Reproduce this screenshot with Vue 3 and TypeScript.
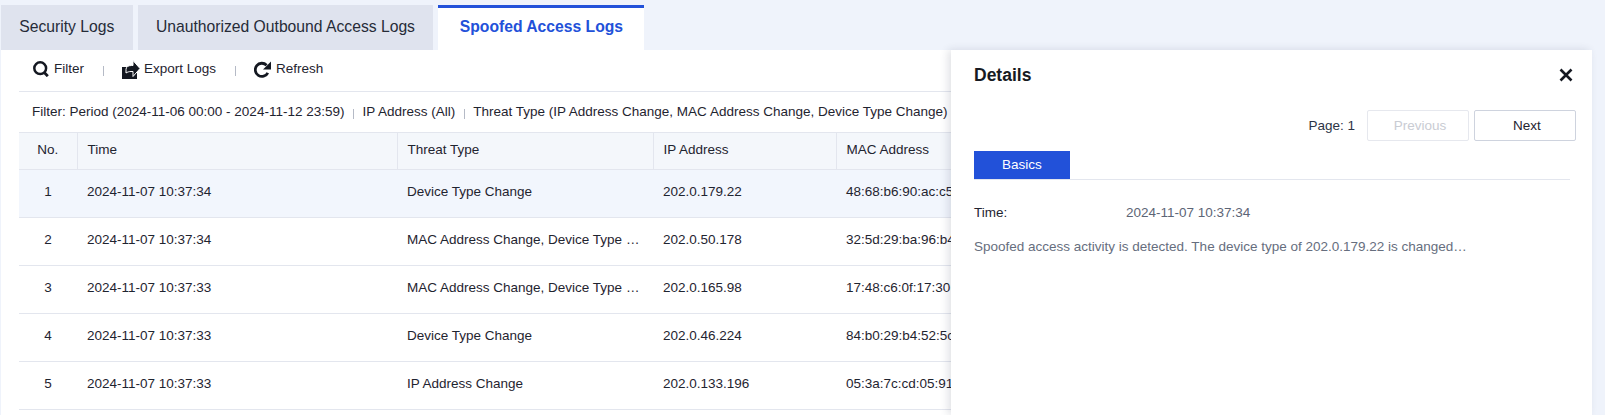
<script setup lang="ts">
interface LogRow {
  no: number
  time: string
  threat: string
  ip: string
  mac: string
}

const tabs = ['Security Logs', 'Unauthorized Outbound Access Logs', 'Spoofed Access Logs']
const activeTab = 2

const rows: LogRow[] = [
  { no: 1, time: '2024-11-07 10:37:34', threat: 'Device Type Change', ip: '202.0.179.22', mac: '48:68:b6:90:ac:c5' },
  { no: 2, time: '2024-11-07 10:37:34', threat: 'MAC Address Change, Device Type Change', ip: '202.0.50.178', mac: '32:5d:29:ba:96:b4' },
  { no: 3, time: '2024-11-07 10:37:33', threat: 'MAC Address Change, Device Type Change', ip: '202.0.165.98', mac: '17:48:c6:0f:17:30' },
  { no: 4, time: '2024-11-07 10:37:33', threat: 'Device Type Change', ip: '202.0.46.224', mac: '84:b0:29:b4:52:5c' },
  { no: 5, time: '2024-11-07 10:37:33', threat: 'IP Address Change', ip: '202.0.133.196', mac: '05:3a:7c:cd:05:91' },
]
</script>

<template>
  <div class="page">
    <div class="tabs">
      <div v-for="(tab, i) in tabs" :key="tab" :class="['tab', { active: i === activeTab }]">{{ tab }}</div>
    </div>

    <div class="content">
      <div class="toolbar">
        <span class="tool">
          <svg width="16" height="16" viewBox="0 0 16 16" fill="none">
            <circle cx="7.200" cy="7.200" r="5.900" stroke="#141821" stroke-width="2.500" />
            <path d="M10.800 11l4 4.200" stroke="#141821" stroke-width="2.800" />
          </svg>
          Filter
        </span>
        <i class="sep"></i>
        <span class="tool">
          <svg class="export-icon" width="18" height="19" viewBox="0 0 18 19">
            <path d="M0 7h7v3h8v9H0z" fill="#141821" />
            <path d="M4 13V9.500C4 7 6 5.500 9.500 5.500H11V.5L18 8.500 11 16.500V11.500H9C7 11.500 5.500 12 4 13z" fill="#141821" stroke="#fff" stroke-width="1" />
          </svg>
          Export Logs
        </span>
        <i class="sep"></i>
        <span class="tool">
          <svg width="17" height="17" viewBox="0 0 17 17" fill="none">
            <path d="M13.800 11.800A6.600 6.600 0 1 1 12.600 4.200" stroke="#141821" stroke-width="2.800" />
            <path d="M9 8.500h8V.5z" fill="#141821" />
          </svg>
          Refresh
        </span>
      </div>

      <div class="filters">
        <span>Filter: Period (2024-11-06 00:00 - 2024-11-12 23:59)</span>
        <i class="sep small"></i>
        <span>IP Address (All)</span>
        <i class="sep small"></i>
        <span>Threat Type (IP Address Change, MAC Address Change, Device Type Change)</span>
      </div>

      <table class="logs">
        <colgroup>
          <col style="width: 58px" />
          <col style="width: 320px" />
          <col style="width: 256px" />
          <col style="width: 183px" />
          <col />
        </colgroup>
        <thead>
          <tr>
            <th class="center">No.</th>
            <th>Time</th>
            <th>Threat Type</th>
            <th>IP Address</th>
            <th>MAC Address</th>
          </tr>
        </thead>
        <tbody>
          <tr v-for="(row, i) in rows" :key="row.no" :class="{ selected: i === 0 }">
            <td class="center">{{ row.no }}</td>
            <td>{{ row.time }}</td>
            <td class="threat">{{ row.threat }}</td>
            <td>{{ row.ip }}</td>
            <td>{{ row.mac }}</td>
          </tr>
        </tbody>
      </table>
    </div>

    <aside class="panel">
      <header class="panel-head">
        <h2>Details</h2>
        <svg class="close" width="14" height="14" viewBox="0 0 14 14">
          <path d="M1.500 1.500l11 11M12.500 1.500l-11 11" stroke="#141821" stroke-width="2.600" fill="none" />
        </svg>
      </header>
      <div class="pager">
        <span class="page-no">Page: 1</span>
        <button class="btn" disabled>Previous</button>
        <button class="btn">Next</button>
      </div>
      <div class="panel-tabs">
        <div class="panel-tab">Basics</div>
      </div>
      <div class="field">
        <span class="label">Time:</span>
        <span class="value">2024-11-07 10:37:34</span>
      </div>
      <p class="desc">Spoofed access activity is detected. The device type of 202.0.179.22 is changed…</p>
    </aside>
  </div>
</template>

<style>
html,
body {
  margin: 0;
  background: #eff3fb;
}
</style>

<style scoped>
.page {
  position: relative;
  width: 1605px;
  height: 415px;
  overflow: hidden;
  box-sizing: border-box;
  padding: 5px 13px 0 1px;
  background: #eff3fb;
  font-family: 'Liberation Sans', Arial, sans-serif;
  font-size: 13.500px;
  color: #1f2430;
}

.tabs {
  display: flex;
  gap: 5px;
  height: 45px;
}

.tab {
  box-sizing: border-box;
  padding: 0 18.300px;
  background: #dfe3ee;
  font-size: 15.700px;
  line-height: 43px;
  color: #262b38;
}

.tab.active {
  padding: 0 20.500px 0 21.500px;
  border-top: 3px solid #2251d9;
  background: #fff;
  font-weight: 700;
  line-height: 38px;
  color: #2251d9;
}

.content {
  height: 365px;
  padding-left: 18px;
  background: #fff;
}

.toolbar {
  display: flex;
  align-items: center;
  height: 41px;
  padding-left: 14px;
  border-bottom: 1px solid #e3e6ee;
}

.tool {
  display: flex;
  align-items: center;
  gap: 5px;
  line-height: 16px;
  padding-bottom: 3px;
}

.export-icon {
  margin-right: -1px;
}

.toolbar .sep {
  margin: 0 18px 0 19px;
}

.sep {
  display: block;
  width: 1px;
  height: 10px;
  background: #b5bac6;
}

.filters {
  display: flex;
  align-items: center;
  height: 40px;
  padding-left: 13px;
  padding-bottom: 2px;
  box-sizing: border-box;
  white-space: nowrap;
}

.sep.small {
  height: 10px;
  margin: 5px 8.500px 0;
}

.logs {
  width: 100%;
  border-collapse: collapse;
  table-layout: fixed;
}

.logs th,
.logs td {
  box-sizing: border-box;
  overflow: hidden;
  padding: 0 10px 3px;
  border-bottom: 1px solid #e3e6ee;
  font-weight: 400;
  text-align: left;
  white-space: nowrap;
  text-overflow: ellipsis;
}

.logs th {
  height: 37px;
  border-top: 1px solid #e3e6ee;
  border-right: 1px solid #e3e6ee;
  background: #f4f7fb;
}

.logs td {
  height: 48px;
  padding-bottom: 5px;
}

.logs .threat {
  padding-right: 12px;
}

.logs th.center {
  padding: 0 0 3px;
  text-align: center;
}

.logs td.center {
  padding: 0 0 5px;
  text-align: center;
}

.selected td {
  background: #f2f6fd;
}

.panel {
  position: absolute;
  top: 50px;
  left: 951px;
  bottom: 0;
  width: 641px;
  box-sizing: border-box;
  padding: 0 22px 0 23px;
  background: #fff;
  box-shadow: -3px 0 8px rgba(40, 50, 80, 0.14);
}

.panel-head {
  display: flex;
  align-items: center;
  justify-content: space-between;
  height: 49px;
  padding-top: 1px;
  box-sizing: border-box;
}

.panel-head h2 {
  margin: 0;
  font-size: 17.500px;
  font-weight: 700;
  color: #171a22;
}

.close {
  margin-right: -3px;
}

.pager {
  display: flex;
  align-items: center;
  justify-content: flex-end;
  gap: 5px;
  margin: 11px -6px 0 0;
}

.page-no {
  margin-right: 7px;
  color: #2c3446;
}

.btn {
  width: 102px;
  height: 31px;
  padding: 0 0 0 4px;
  border: 1px solid #ced3de;
  border-radius: 2px;
  background: #fff;
  font: inherit;
  color: #1f2430;
}

.btn:disabled {
  border-color: #e6e8ee;
  color: #c9ccd3;
}

.panel-tabs {
  display: flex;
  margin-top: 10px;
  border-bottom: 1px solid #e3e6ee;
}

.panel-tab {
  width: 96px;
  height: 28px;
  background: #2251d9;
  line-height: 28px;
  text-align: center;
  color: #fff;
}

.field {
  display: flex;
  margin-top: 25px;
  line-height: 16px;
}

.label {
  width: 152px;
}

.value {
  color: #5d6576;
}

.desc {
  margin: 18px 0 0;
  line-height: 16px;
  color: #666e7e;
}
</style>
